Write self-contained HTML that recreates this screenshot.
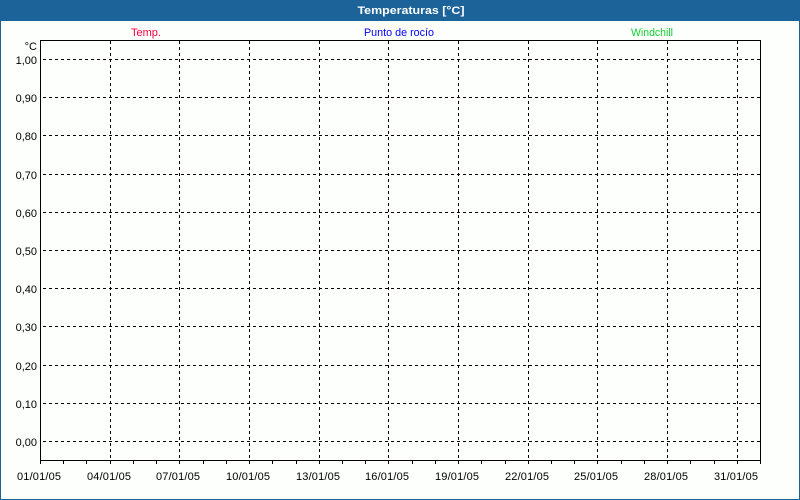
<!DOCTYPE html>
<html lang="es">
<head>
<meta charset="utf-8">
<title>Temperaturas</title>
<style>
html,body{margin:0;padding:0;width:800px;height:500px;overflow:hidden;background:#fdfffd}
svg{display:block}
text{font-family:"Liberation Sans",sans-serif;font-size:11px;fill:#000}
</style>
</head>
<body>
<svg width="800" height="500" viewBox="0 0 800 500" xmlns="http://www.w3.org/2000/svg">
<rect width="800" height="500" fill="#fdfffd"/>
<rect x="0.5" y="0.5" width="799" height="499" fill="none" stroke="#1c6399"/>
<rect width="800" height="21" fill="#1c6399"/>
<text x="411" y="14" text-anchor="middle" style="font-weight:bold;fill:#fff" textLength="107" lengthAdjust="spacingAndGlyphs">Temperaturas [°C]</text>
<text x="146" y="36" text-anchor="middle" style="fill:#ff0040" textLength="30" lengthAdjust="spacingAndGlyphs">Temp.</text>
<text x="399" y="36" text-anchor="middle" style="fill:#0000ff" textLength="70" lengthAdjust="spacingAndGlyphs">Punto de rocío</text>
<text x="652" y="36" text-anchor="middle" style="fill:#10d030" textLength="42" lengthAdjust="spacingAndGlyphs">Windchill</text>

<g shape-rendering="crispEdges" stroke="#000" fill="none" stroke-dasharray="3 3">
<path d="M43 59.5H760M43 97.5H760M43 135.5H760M43 174.5H760M43 212.5H760M43 250.5H760M43 288.5H760M43 326.5H760M43 365.5H760M43 403.5H760M43 441.5H760"/>
<path d="M110.5 41V460M179.5 41V460M249.5 41V460M319.5 41V460M388.5 41V460M458.5 41V460M528.5 41V460M597.5 41V460M667.5 41V460M737.5 41V460"/>
</g>
<g shape-rendering="crispEdges" stroke="#000" fill="none">
<rect x="40.5" y="40.5" width="720" height="420"/>
<path d="M40.5 461V464M63.5 461V464M86.5 461V464M110.5 461V464M133.5 461V464M156.5 461V464M179.5 461V464M203.5 461V464M226.5 461V464M249.5 461V464M272.5 461V464M296.5 461V464M319.5 461V464M342.5 461V464M365.5 461V464M388.5 461V464M412.5 461V464M435.5 461V464M458.5 461V464M481.5 461V464M505.5 461V464M528.5 461V464M551.5 461V464M574.5 461V464M597.5 461V464M621.5 461V464M644.5 461V464M667.5 461V464M690.5 461V464M714.5 461V464M737.5 461V464M760.5 461V464"/>
</g>

<g text-anchor="end">
<text x="37" y="50">°C</text>
<text x="37" y="64">1,00</text>
<text x="37" y="102">0,90</text>
<text x="37" y="140">0,80</text>
<text x="37" y="179">0,70</text>
<text x="37" y="217">0,60</text>
<text x="37" y="255">0,50</text>
<text x="37" y="293">0,40</text>
<text x="37" y="331">0,30</text>
<text x="37" y="370">0,20</text>
<text x="37" y="408">0,10</text>
<text x="37" y="446">0,00</text>
</g>
<g text-anchor="middle">
<text x="39" y="480" textLength="44">01/01/05</text>
<text x="109" y="480" textLength="44">04/01/05</text>
<text x="178" y="480" textLength="44">07/01/05</text>
<text x="248" y="480" textLength="44">10/01/05</text>
<text x="318" y="480" textLength="44">13/01/05</text>
<text x="387" y="480" textLength="44">16/01/05</text>
<text x="457" y="480" textLength="44">19/01/05</text>
<text x="527" y="480" textLength="44">22/01/05</text>
<text x="596" y="480" textLength="44">25/01/05</text>
<text x="666" y="480" textLength="44">28/01/05</text>
<text x="736" y="480" textLength="44">31/01/05</text>
</g>
</svg>
</body>
</html>
